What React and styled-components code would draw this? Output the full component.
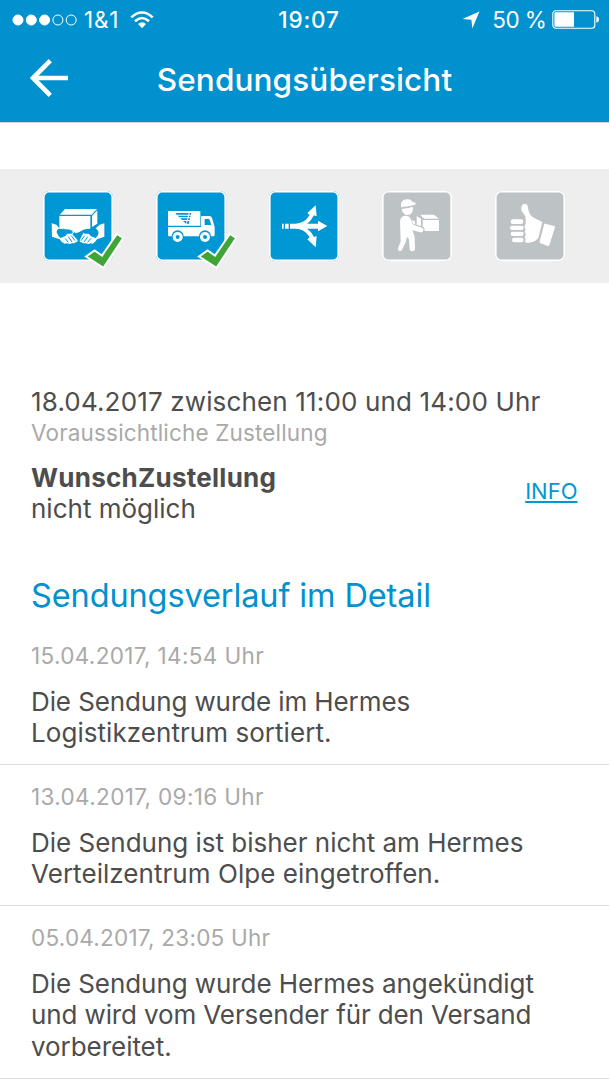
import styled, { createGlobalStyle } from 'styled-components';

const steps = [
  { id: 'parcel', active: true, done: true, viewBox: '39 33 210 210', Icon: ParcelIcon },
  { id: 'truck', active: true, done: true, viewBox: '33 33 210 210', Icon: TruckIcon },
  { id: 'route', active: true, done: false, viewBox: '27 33 210 210', Icon: RouteIcon },
  { id: 'courier', active: false, done: false, viewBox: '30 33 210 210', Icon: CourierIcon },
  { id: 'thumb', active: false, done: false, viewBox: '27 33 210 210', Icon: ThumbIcon },
];

const history = [
  {
    date: '15.04.2017, 14:54 Uhr',
    spacing: 0.35,
    lines: [
      { text: 'Die Sendung wurde im Hermes', spacing: -0.1 },
      { text: 'Logistikzentrum sortiert.', spacing: 0.05 },
    ],
  },
  {
    date: '13.04.2017, 09:16 Uhr',
    spacing: 0.36,
    lines: [
      { text: 'Die Sendung ist bisher nicht am Hermes', spacing: -0.01 },
      { text: 'Verteilzentrum Olpe eingetroffen.', spacing: 0.05 },
    ],
  },
  {
    date: '05.04.2017, 23:05 Uhr',
    spacing: 0.24,
    lines: [
      { text: 'Die Sendung wurde Hermes angekündigt', spacing: -0.07 },
      { text: 'und wird vom Versender für den Versand', spacing: -0.12 },
      { text: 'vorbereitet.', spacing: -0.05 },
    ],
  },
];

function ParcelIcon() {
  return (
    <g fill="#fff">
      <path d="M89 104 L105 87 H201 L185 104 Z" />
      <path d="M88 108 H181 V146 Q160 146 148 156 L137 160 L127 151 Q108 144 88 147 Z" />
      <path d="M186 108 L202 91 V131 L186 141 Z" />
      <path d="M65 130 L79 134 L88 145 Q77 152 81 160 Q84 168 94 171 L104 164 L113 158 L129 158 L120 151 L108 148 L93 147 L129 152 L133 157 L127 163 L143 181 Q144 187 137 187 L133 190 L126 190 L118 192 L111 190 L104 191 Q94 187 89 178 L66 170 Z" />
      <path d="M223 130 L209 134 L197 145 Q207 152 205 160 Q202 168 193 171 L184 164 L174 158 L160 158 L149 181 Q148 187 154 187 L160 190 L167 190 L175 192 L182 190 L188 191 Q196 187 201 178 L223 170 Z" />
      <path
        d="M84 155 Q96 146 110 149 L126 153 Q131 158 124 161 L112 161 L105 169 L92 174 Q81 166 84 155 Z M204 155 Q192 146 178 149 L162 153 Q157 158 164 161 L176 161 L183 169 L196 174 Q207 166 204 155 Z"
        fill="#0098d4"
      />
      <path
        d="M105 175 L115 187 M115 170 L126 186 M124 167 L135 182 M183 175 L173 187 M173 170 L162 186 M164 167 L153 182"
        stroke="#0098d4"
        strokeWidth="3"
        fill="none"
      />
      <path d="M138 160 H150 L144 174 Z" fill="#0098d4" />
    </g>
  );
}

function TruckIcon() {
  return (
    <g fill="#fff">
      <path d="M69 93 H166 V137 H69 Z" />
      <path d="M69 141 H168 V112 Q168 108 172 108 H193 Q199 108 201 114 L208 137 Q209 140 209 144 V165 Q209 169 205 169 H198 A18 18 0 0 0 162 169 H116 A18 18 0 0 0 80 169 H73 Q69 169 69 165 Z" />
      <circle cx="98" cy="171" r="15" />
      <circle cx="180" cy="171" r="15" />
      <g fill="#0098d4">
        <circle cx="98" cy="171" r="6" />
        <circle cx="180" cy="171" r="6" />
        <path d="M179 117 H191 Q193 117 194 120 L199 135 H179 Z" />
        <path d="M91 99 H131 L130 104 H95 Z M98 107 H129 L128 112 H103 Z M106 115 H127 L126 120 H111 Z M114 123 H125 L123 131 Z" />
        <path d="M134 99 H139 L138 104 H133 Z M132 107 H137 L136 112 H131 Z M130 115 H135 L134 120 H129 Z M128 123 H133 L131 132 H125 Z" />
      </g>
    </g>
  );
}

function RouteIcon() {
  return (
    <g fill="#fff">
      <path d="M66 131 H71 V146 H66 Z M75 131 H86 V146 H75 Z" />
      <path d="M90 131 H107 Q132 130 144 112 L149 105 L142 99 L167 76 L170 109 L162 106 L155 117 Q149 126 141 131 H174 V122 L202 138 L174 154 V146 H141 Q149 151 155 160 L162 171 L170 168 L167 202 L142 178 L149 172 L144 165 Q132 147 107 146 H90 Z" />
    </g>
  );
}

function CourierIcon() {
  return (
    <g fill="#fff">
      <path d="M87 82 Q84 59 105 58 Q117 57 121 65 L130 68 Q134 72 127 75 L108 79 Z" />
      <path d="M89 87 L109 84 L122 80 Q125 92 119 100 Q112 107 101 104 Q91 100 89 87 Z" />
      <path d="M84 123 Q86 108 99 107 Q111 106 116 116 L123 134 L150 143 Q156 145 154 152 Q152 158 145 157 L121 151 L128 170 L129 207 Q128 215 120 214 Q113 213 113 206 L111 178 L105 170 L101 187 L90 209 Q87 215 80 212 Q75 208 79 202 L86 185 Z" />
      <path d="M119 120 L129 124 V134 L124 132 Z M134 108 L147 116 V139 L134 134 Z" />
      <path d="M145 104 H186 L201 116 H156 Z" />
      <path d="M152 120 H201 V153 H158 Q159 143 152 139 Z" />
    </g>
  );
}

function ThumbIcon() {
  return (
    <g fill="#fff">
      <path d="M119 122 Q121 107 107 94 Q103 76 113 72 Q122 69 125 78 Q127 99 137 109 Q146 116 169 126 L157 174 Q145 188 129 188 H120 Q115 183 119 177 L116 172 L120 163 L116 156 L119 148 L115 140 L119 132 Z" />
      <path d="M178 131 L205 138 Q208 139 207 142 L190 196 Q188 199 185 198 L162 189 Q160 187 161 184 L174 134 Q175 130 178 131 Z" />
      <rect x="74" y="118" width="38" height="14" rx="7" />
      <rect x="72" y="137" width="41" height="13" rx="6.5" />
      <rect x="74" y="155" width="39" height="13" rx="6.5" />
      <rect x="78" y="173" width="35" height="14" rx="7" />
    </g>
  );
}

const StatusBar = () => (
  <StatusWrap>
    <StatusSide>
      <svg width="66" height="12" viewBox="0 0 66 12" fill="#fff" stroke="#fff">
        <circle cx="6" cy="6" r="5" />
        <circle cx="19.3" cy="6" r="5" />
        <circle cx="32.6" cy="6" r="5" />
        <circle cx="45.9" cy="6" r="5" fill="none" />
        <circle cx="59.2" cy="6" r="5" fill="none" />
      </svg>
      <Carrier>1&1</Carrier>
      <WifiIcon width="24" height="18" viewBox="0 0 24 18">
        <g fill="none" stroke="#fff" strokeWidth="2.6">
          <path d="M1.3 6.4 Q12 -3.4 22.7 6.4" />
          <path d="M5 10.2 Q12 3.8 19 10.2" />
        </g>
        <path d="M8 12.9 Q12 9.4 16 12.9 L12 17.2 Z" fill="#fff" />
      </WifiIcon>
    </StatusSide>
    <Clock>19:07</Clock>
    <StatusSide $end>
      <svg width="18" height="18" viewBox="0 0 18 18">
        <path d="M17.5 0.5 L10.3 17.5 L9.4 8.8 L0.5 8 Z" fill="#fff" />
      </svg>
      <Percent>50 %</Percent>
      <svg width="47" height="19" viewBox="0 0 47 19">
        <rect x="0.8" y="0.8" width="42" height="17.4" rx="3" fill="none" stroke="#fff" strokeWidth="1.1" />
        <path d="M2.4 3.5 Q2.4 2.3 3.6 2.3 H22 V16.7 H3.6 Q2.4 16.7 2.4 15.5 Z" fill="#fff" />
        <path d="M44.3 6.2 Q47 6.8 47 9.5 Q47 12.2 44.3 12.8 Z" fill="#fff" />
      </svg>
    </StatusSide>
  </StatusWrap>
);

const App = () => {
  return (
    <Screen>
      <GlobalStyle />
      <Header>
        <StatusBar />
        <TitleBar>
          <BackButton aria-label="Zurück">
            <svg width="39" height="38" viewBox="0 0 39 38">
              <path d="M20.3 1.7 L3 19 L20.3 36.3 M3 19 H38" fill="none" stroke="#fff" strokeWidth="4.6" />
            </svg>
          </BackButton>
          <Title>Sendungsübersicht</Title>
        </TitleBar>
      </Header>

      <StepBar>
        {steps.map(({ id, active, done, viewBox, Icon }) => (
          <Step key={id} $active={active}>
            <svg width="70" height="70" viewBox={viewBox}>
              <Icon />
            </svg>
            {done && (
              <CheckMark width="41" height="38" viewBox="0 0 41 38">
                <path
                  d="M2 24.5 L10.5 18.5 L18 23.5 L33 1.8 L39.2 6 L19.5 35.8 Z"
                  fill="#3fa535"
                  stroke="#fff"
                  strokeWidth="2"
                />
              </CheckMark>
            )}
          </Step>
        ))}
      </StepBar>

      <Summary>
        <Text $spacing={0.15}>18.04.2017 zwischen 11:00 und 14:00 Uhr</Text>
        <Muted $spacing={0.16}>Voraussichtliche Zustellung</Muted>
        <Preference>
          <div>
            <Strong $spacing={0.26}>WunschZustellung</Strong>
            <Text $spacing={0}>nicht möglich</Text>
          </div>
          <InfoLink href="#info">INFO</InfoLink>
        </Preference>
      </Summary>

      <Heading>Sendungsverlauf im Detail</Heading>
      {history.map(({ date, spacing, lines }) => (
        <Entry key={date}>
          <Muted $spacing={spacing}>{date}</Muted>
          <EntryText>
            {lines.map((line) => (
              <Text key={line.text} $spacing={line.spacing}>
                {line.text}
              </Text>
            ))}
          </EntryText>
        </Entry>
      ))}
    </Screen>
  );
};

export default App;

const GlobalStyle = createGlobalStyle`
  * {
    box-sizing: border-box;
  }

  body {
    margin: 0;
    background: #fff;
    font-family: Inter, 'Liberation Sans', sans-serif;
  }

  p, h1, h2 {
    margin: 0;
  }

  svg {
    display: block;
    flex-shrink: 0;
  }
`;

const Screen = styled.div`
  width: 609px;
  height: 1080px;
  overflow: hidden;
  background: #fff;
`;

const Header = styled.header`
  height: 123px;
  background: #0091ce;
  border-bottom: 1px solid #c9d3d8;
  color: #fff;
`;

const StatusWrap = styled.div`
  display: grid;
  grid-template-columns: 1fr auto 1fr;
  align-items: center;
  height: 39px;
  padding: 0 10px 0 12px;
  font-size: 22.5px;
  line-height: 39px;
`;

const StatusSide = styled.div`
  display: flex;
  align-items: center;
  justify-content: ${(props) => (props.$end ? 'flex-end' : 'flex-start')};
`;

const Carrier = styled.span`
  margin-left: 6px;
  letter-spacing: 0.8px;
`;

const WifiIcon = styled.svg`
  margin-left: 11px;
`;

const Clock = styled.span`
  padding-left: 7px;
  font-weight: 500;
  letter-spacing: 0.8px;
`;

const Percent = styled.span`
  margin: 0 5.5px 0 12px;
  letter-spacing: -0.3px;
  word-spacing: -0.8px;
`;

const TitleBar = styled.div`
  position: relative;
  display: flex;
  align-items: center;
  justify-content: center;
  height: 83px;
`;

const BackButton = styled.button`
  position: absolute;
  left: 30px;
  top: 20px;
  padding: 0;
  border: 0;
  background: none;
`;

const Title = styled.h1`
  margin-bottom: 2px;
  font-size: 31.5px;
  font-weight: 550;
  line-height: 40px;
  letter-spacing: 0.12px;
`;

const StepBar = styled.div`
  display: flex;
  justify-content: space-between;
  margin-top: 46px;
  height: 114px;
  padding: 22px 44px 0 43px;
  background: #eeeeee;
`;

const Step = styled.div`
  position: relative;
  width: 70px;
  height: 70px;
  border-radius: 6px;
  background: ${(props) => (props.$active ? '#0098d4' : '#bdc2c5')};
  box-shadow: inset 0 0 0 1.6px #fff;
`;

const CheckMark = styled.svg`
  position: absolute;
  left: 41px;
  top: 41px;
`;

const Summary = styled.section`
  padding: 102.5px 31px 0;
`;

const Text = styled.p`
  font-size: 26px;
  line-height: 31.5px;
  letter-spacing: ${(props) => props.$spacing}px;
  color: #4d4d4d;
  white-space: nowrap;
`;

const Strong = styled(Text)`
  font-weight: 700;
  line-height: 31px;
`;

const Muted = styled.p`
  font-size: 22.5px;
  line-height: 31px;
  letter-spacing: ${(props) => props.$spacing}px;
  color: #a9a9a9;
  white-space: nowrap;
`;

const Preference = styled.div`
  display: flex;
  align-items: center;
  justify-content: space-between;
  margin-top: 13.5px;
`;

const InfoLink = styled.a`
  margin: 0 0.5px 3.5px 0;
  font-size: 22px;
  line-height: 30px;
  color: #0098d4;
  text-underline-offset: 2px;
  text-decoration-thickness: 2px;
`;

const Heading = styled.h2`
  margin: 52px 31px 8.4px;
  font-size: 32.5px;
  font-weight: 400;
  line-height: 40px;
  letter-spacing: -0.12px;
  color: #0091ce;
  white-space: nowrap;
`;

const Entry = styled.article`
  padding: 15.5px 31px;
  border-bottom: 1px solid #dedede;
`;

const EntryText = styled.div`
  margin-top: 15px;
`;
